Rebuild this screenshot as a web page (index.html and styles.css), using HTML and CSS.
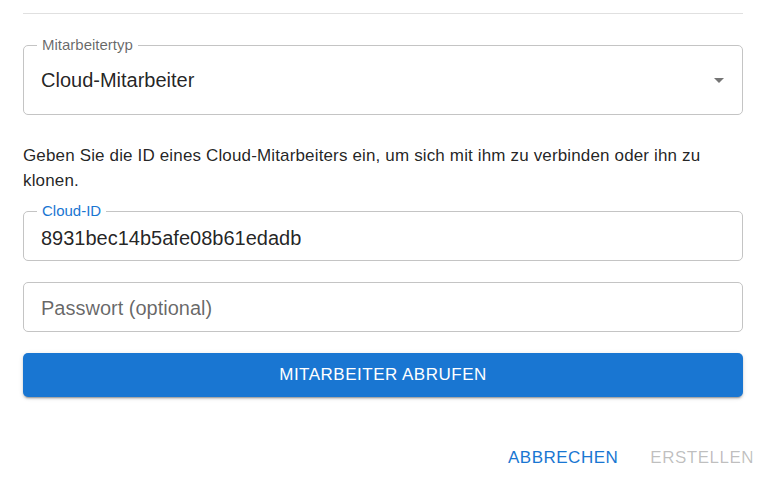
FILE: index.html
```html
<!DOCTYPE html>
<html lang="de">
<head>
    <meta charset="UTF-8">
    <title>Mitarbeiter hinzufügen</title>
    <link rel="stylesheet" href="styles.css">
</head>
<body>
    <div class="dialog">
        <div class="content">
            <hr class="divider">

            <div class="field select">
                <span class="label">Mitarbeitertyp</span>
                <span class="value">Cloud-Mitarbeiter</span>
                <span class="arrow"></span>
            </div>

            <p class="hint">Geben Sie die ID eines Cloud-Mitarbeiters ein, um sich mit ihm zu verbinden oder ihn zu klonen.</p>

            <div class="field small cloud-id">
                <span class="label focused">Cloud-ID</span>
                <span class="value">8931bec14b5afe08b61edadb</span>
            </div>

            <div class="field small password">
                <span class="placeholder">Passwort (optional)</span>
            </div>

            <button class="fetch">Mitarbeiter abrufen</button>
        </div>

        <div class="actions">
            <button class="text">Abbrechen</button>
            <button class="text disabled">Erstellen</button>
        </div>
    </div>
</body>
</html>
```

FILE: styles.css
```css
body {
    margin: 0;
    padding: 0;
    background-color: #fff;
    font-family: 'Liberation Sans', Arial, sans-serif;
    color: rgba(0, 0, 0, 0.87);
}

.dialog {
    width: 771px;
    height: 486px;
}

.content {
    padding: 0 28px 0 23px;
}

.divider {
    margin: 13px 0 0 0;
    border: none;
    border-top: 1px solid #e0e0e0;
}

/* outlined inputs */
.field {
    box-sizing: border-box;
    border: 1px solid #c4c4c4;
    border-radius: 5px;
    padding: 0 17px;
    display: flex;
    align-items: center;
    position: relative;
    font-size: 20px;
}

.label {
    position: absolute;
    top: -10px;
    left: 13px;
    padding: 0 5px;
    background-color: #fff;
    font-size: 15px;
    line-height: 18px;
    color: rgba(0, 0, 0, 0.6);
}

.label.focused {
    color: #1976d2;
}

.select {
    margin-top: 31px;
    height: 70px;
}

.select .value {
    flex: 1;
}

.arrow {
    width: 0;
    height: 0;
    border-left: 5.5px solid transparent;
    border-right: 5.5px solid transparent;
    border-top: 5.5px solid #757575;
    margin-right: 1px;
}

.hint {
    margin: 28px 0 0 0;
    font-size: 17px;
    letter-spacing: 0.15px;
    line-height: 25px;
}

.small {
    height: 50px;
}

.cloud-id {
    margin-top: 18px;
    padding-top: 4px;
}

.password {
    margin-top: 21px;
    padding-top: 2px;
}

.placeholder {
    color: rgba(0, 0, 0, 0.6);
}

.fetch {
    display: block;
    width: 100%;
    margin-top: 21px;
    height: 44px;
    border: none;
    border-radius: 5px;
    background-color: #1976d2;
    color: #fff;
    font-family: inherit;
    font-size: 17px;
    letter-spacing: 0.5px;
    text-transform: uppercase;
    box-shadow: 0 3px 1px -2px rgba(0,0,0,0.2), 0 2px 2px 0 rgba(0,0,0,0.14), 0 1px 5px 0 rgba(0,0,0,0.12);
}

.actions {
    display: flex;
    justify-content: flex-end;
    gap: 16px;
    margin-top: 43px;
    padding-right: 9px;
}

.text {
    border: none;
    background: none;
    font-family: inherit;
    font-size: 17px;
    letter-spacing: 0.5px;
    text-transform: uppercase;
    color: #1976d2;
    padding: 0 8px;
    height: 36px;
}

.text.disabled {
    color: rgba(0, 0, 0, 0.26);
}
```
